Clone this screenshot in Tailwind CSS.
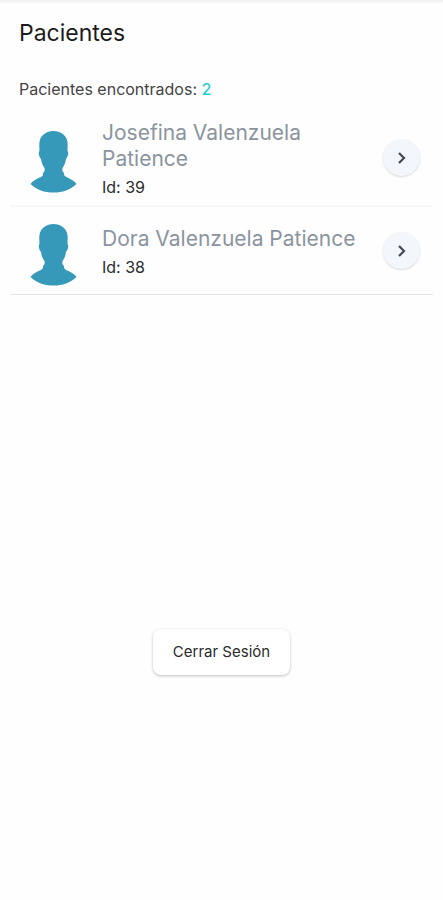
<!DOCTYPE html>
<html lang="es">

<head>
    <meta charset="UTF-8">
    <meta name="viewport" content="width=device-width, initial-scale=1.0">
    <title>Pacientes</title>

    <script src="https://cdn.jsdelivr.net/npm/@tailwindcss/browser@4"></script>
</head>

<body class="min-h-screen bg-[#fefefe] font-['Inter',sans-serif] text-[#2b2b2b]">

    <div class="h-[3px] bg-linear-to-b from-[#f0f0f0] to-[#fafafa]"></div>

    <header class="px-[19px] pt-3">
        <h1 class="text-[23px] leading-9 text-[#1c1c1c]">Pacientes</h1>
        <p class="mt-[26px] text-base leading-6 text-[#444444]">Pacientes encontrados: <span class="font-medium text-[#1fcfd2]">2</span></p>
    </header>

    <main>
        <ul class="mt-2 px-[10px]">
            <li class="flex items-center border-b-2 border-[#f7f7f7] pt-[11px] pb-[6px] pl-5 pr-[13px]">
                <svg class="mt-[5px] h-[62px] w-[47px] shrink-0" viewBox="0 0 46 62" fill="#3799ba" aria-hidden="true">
                    <path d="M23 0C30 0 36 4 37 11C37.400 14 37 17 37 20C38.500 21 37.500 26 35.500 28C35 32 33.500 35 32 37C31.500 39 32 41 33.500 42C33 45 36 46 38 47C41 48.500 44 50 46 53C40 59 32 61.500 23 61.500C14 61.500 6 59 0 53C2 50 5 48.500 8 47C11 46 13 45 12.500 42C14 41 14.500 39 14 37C12.500 35 11 32 10.500 28C8.500 26 7.500 21 9 20C9 17 8.500 14 9 11C10 4 16 0 23 0Z" />
                </svg>
                <div class="ml-[25px] min-w-0 flex-1">
                    <h2 class="text-[21px] leading-[26px] text-[#8b949e]">Josefina Valenzuela Patience</h2>
                    <p class="mt-[3px] text-base leading-6">Id: 39</p>
                </div>
                <button type="button" aria-label="Ver Josefina Valenzuela Patience" class="mb-1 flex size-[37px] shrink-0 items-center justify-center rounded-full bg-[#f3f6fa] shadow-[0_1px_2px_rgba(0,0,0,0.15)]">
                    <svg class="h-3 w-2" viewBox="0 0 8 12" fill="none" stroke="#434a54" stroke-width="2.200">
                        <path d="M1 1L6 6L1 11" />
                    </svg>
                </button>
            </li>
            <li class="flex items-center border-b border-[#e5e5e5] pt-[12px] pb-[8px] pl-5 pr-[13px]">
                <svg class="mt-[5px] h-[62px] w-[47px] shrink-0" viewBox="0 0 46 62" fill="#3799ba" aria-hidden="true">
                    <path d="M23 0C30 0 36 4 37 11C37.400 14 37 17 37 20C38.500 21 37.500 26 35.500 28C35 32 33.500 35 32 37C31.500 39 32 41 33.500 42C33 45 36 46 38 47C41 48.500 44 50 46 53C40 59 32 61.500 23 61.500C14 61.500 6 59 0 53C2 50 5 48.500 8 47C11 46 13 45 12.500 42C14 41 14.500 39 14 37C12.500 35 11 32 10.500 28C8.500 26 7.500 21 9 20C9 17 8.500 14 9 11C10 4 16 0 23 0Z" />
                </svg>
                <div class="ml-[25px] min-w-0 flex-1">
                    <h2 class="text-[21px] leading-[26px] text-[#8b949e]">Dora Valenzuela Patience</h2>
                    <p class="mt-[3px] text-base leading-6">Id: 38</p>
                </div>
                <button type="button" aria-label="Ver Dora Valenzuela Patience" class="mb-1 flex size-[37px] shrink-0 items-center justify-center rounded-full bg-[#f3f6fa] shadow-[0_1px_2px_rgba(0,0,0,0.15)]">
                    <svg class="h-3 w-2" viewBox="0 0 8 12" fill="none" stroke="#434a54" stroke-width="2.200">
                        <path d="M1 1L6 6L1 11" />
                    </svg>
                </button>
            </li>
        </ul>

        <div class="mt-[334px] flex justify-center pb-8">
            <button type="button" class="rounded-lg bg-white px-5 py-[11px] text-[15px] leading-6 shadow-[0_1px_3px_rgba(0,0,0,0.26)]">Cerrar Sesión</button>
        </div>
    </main>

</body>

</html>
